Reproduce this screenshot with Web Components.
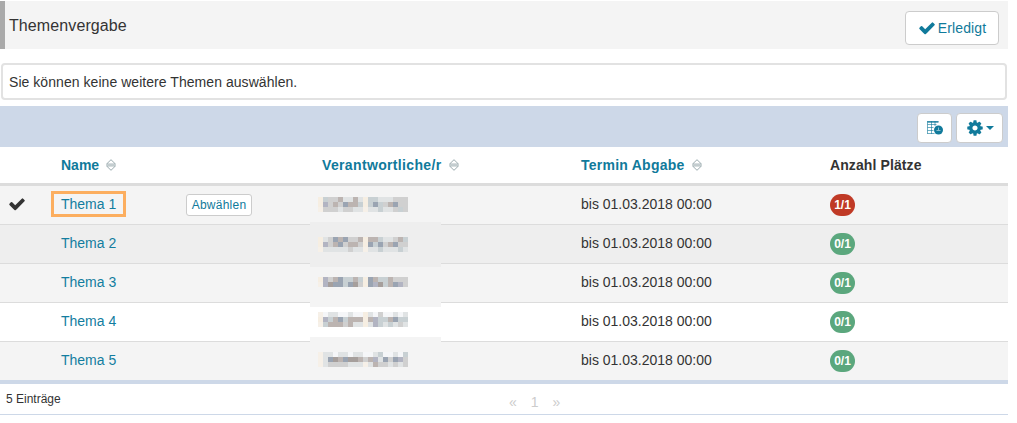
<!DOCTYPE html>
<html lang="de">
<head>
<meta charset="utf-8">
<title>Themenvergabe</title>
<style>
html, body { margin: 0; background: #fff; }
body { font: 14px/20px "Liberation Sans", Arial, sans-serif; color: #333; padding-top: 1px; width: 1008px; }
</style>
</head>
<body>
<page-title>
  Themenvergabe
  <ui-button slot="action" size="large"><ui-icon name="check" size="18"></ui-icon>Erledigt</ui-button>
</page-title>
<info-box>Sie können keine weitere Themen auswählen.</info-box>
<table-toolbar>
  <ui-button size="tool" style="--w:35px"><ui-icon name="table" size="16"></ui-icon></ui-button>
  <ui-button size="tool" style="--w:47px"><ui-icon name="cog" size="18"></ui-icon><ui-icon name="caret" size="8"></ui-icon></ui-button>
</table-toolbar>
<topic-head></topic-head>
<topic-row name="Thema 1" date="bis 01.03.2018 00:00" places="1/1" full chosen focused
  bg="#f4f4f4" top="11" mosaic="acggdeedeacceeeggg,abgdgfddcacfcgdfgg,lgggeggeeleeceegcg">
  <ui-button slot="action" size="small">Abwählen</ui-button>
</topic-row>
<topic-row name="Thema 2" date="bis 01.03.2018 00:00" places="0/1"
  bg="#eeeeee" top="12" patch="-3,45" mosaic="aegfdfggdaddceegdc,abgdfgddgafcfgdfgg,leeeeegeeleeceeece"></topic-row>
<topic-row name="Thema 3" date="bis 01.03.2018 00:00" places="0/1"
  bg="#f4f4f4" top="13" patch="3,40" mosaic="abgdfccdcafdccdggg,lbhffcfhgafbhcdfbg"></topic-row>
<topic-row name="Thema 4" date="bis 01.03.2018 00:00" places="0/1"
  bg="#ffffff" top="9" mosaic="lweewwewwaewgwwewe,abcdfcdddadbccdfcc,lcdddgdeeaebcecege"></topic-row>
<topic-row name="Thema 5" date="bis 01.03.2018 00:00" places="0/1" last
  bg="#f4f4f4" top="10" patch="-5,20" mosaic="leeweeweewwecwwewc,lefhdfhhdgdbefgfbg,leggggeeeledggegeg"></topic-row>
<table-foot></table-foot>

<script>
const ICONS = {
  check: '<svg viewBox="0 0 1792 1792"><path d="M1671 566q0 40-28 68l-724 724-136 136q-28 28-68 28t-68-28l-136-136-362-362q-28-28-28-68t28-68l136-136q28-28 68-28t68 28l294 295 656-657q28-28 68-28t68 28l136 136q28 28 28 68z"/></svg>',
  cog: '<svg viewBox="0 0 1792 1792"><path d="M1152 896q0-106-75-181t-181-75-181 75-75 181 75 181 181 75 181-75 75-181zm512-109v222q0 12-8 23t-20 13l-185 28q-19 54-39 91 35 50 107 138 10 12 10 25t-9 23q-27 37-99 108t-94 71q-12 0-26-9l-138-108q-44 23-91 38-16 136-29 186-7 28-36 28h-222q-14 0-24.500-8.500t-11.500-21.500l-28-184q-49-16-90-37l-141 107q-10 9-25 9-14 0-25-11-126-114-165-168-7-10-7-23 0-12 8-23 15-21 51-66.500t54-70.500q-27-50-41-99l-183-27q-13-2-21-12.500t-8-23.500v-222q0-12 8-23t19-13l186-28q14-46 39-92-40-57-107-138-10-12-10-24 0-10 9-23 26-36 98.500-107.500t94.500-71.500q13 0 26 10l138 107q44-23 91-38 16-136 29-186 7-28 36-28h222q14 0 24.500 8.500t11.500 21.500l28 184q49 16 90 37l142-107q9-9 24-9 13 0 25 10 129 119 165 170 7 8 7 22 0 12-8 23-15 21-51 66.500t-54 70.500q26 50 41 98l183 28q13 2 21 12.500t8 23.500z"/></svg>',
  caret: '<svg viewBox="0 0 8 8"><path d="M0 2h8L4 6z"/></svg>',
  table: '<svg viewBox="0 0 16 16"><path fill="none" stroke="currentColor" opacity=".6" d="M.5 1.500h11M.5 4.500h9M.5 7.500h6M.5 10.500h6M.5 13.500h7M.5 1v13M4.500 1v13M8 1v5"/><path d="M.5 1h11v2H.5z" opacity=".6"/><circle cx="11.500" cy="10" r="4.500"/><path fill="#fff" d="M11 7.500h1v3h-1zM9.500 10h4v1h-4z" opacity=".5"/></svg>',
  sort: '<svg viewBox="0 0 11 12"><path fill="none" stroke="#90a1a6" stroke-width=".9" d="M5.500 .7 10 5.100H1zM1 6.900h9l-4.500 4.400z"/></svg>'
};

class UiIcon extends HTMLElement {
  connectedCallback() {
    const size = this.getAttribute('size') || 16;
    this.attachShadow({mode:'open'}).innerHTML = `
      <style>
        :host { display: inline-flex; flex: none; width: ${size}px; height: ${size}px; }
        svg { width: 100%; height: 100%; fill: currentColor; display: block; }
      </style>${ICONS[this.getAttribute('name')]}`;
  }
}

class UiButton extends HTMLElement {
  connectedCallback() {
    this.attachShadow({mode:'open'}).innerHTML = `
      <style>
        :host {
          display: inline-flex; align-items: center; justify-content: center; box-sizing: border-box;
          background: #fff; color: #107a9b; border: 1px solid #ccc; border-radius: 4px;
        }
        :host([size=large]) { width: 94px; height: 34px; gap: 2px; font-size: 14px; }
        :host([size=tool]) { width: var(--w); height: 30px; gap: 2px; }
        :host([size=small]) { width: 66px; height: 22px; font-size: 12px; letter-spacing: .25px; border-radius: 3px; }
      </style><slot></slot>`;
  }
}

class PageTitle extends HTMLElement {
  connectedCallback() {
    this.attachShadow({mode:'open'}).innerHTML = `
      <style>
        :host {
          display: flex; align-items: flex-start; justify-content: space-between; box-sizing: border-box;
          height: 48px; background: #f4f4f4; border-left: 5px solid #aaa; padding: 10px 9px 0 4px;
          font-size: 16px; line-height: 28px; color: #333; letter-spacing: .1px;
        }
        .t { margin-top: 1px; }
      </style><div class="t"><slot></slot></div><slot name="action"></slot>`;
  }
}

class InfoBox extends HTMLElement {
  connectedCallback() {
    this.attachShadow({mode:'open'}).innerHTML = `
      <style>
        :host {
          display: block; box-sizing: border-box; height: 37px; margin: 14px 1px 6px 1px;
          padding: 7px 6px; border: 2px solid #e2e2e2; border-radius: 4px; background: #fff; letter-spacing: .05px;
        }
      </style><slot></slot>`;
  }
}

class TableToolbar extends HTMLElement {
  connectedCallback() {
    this.attachShadow({mode:'open'}).innerHTML = `
      <style>
        :host {
          display: flex; justify-content: flex-end; align-items: flex-start; gap: 4px; box-sizing: border-box;
          height: 41px; background: #cdd8e8; padding: 7px 5px 0 0;
        }
      </style><slot></slot>`;
  }
}

const GRID = 'display: grid; grid-template-columns: 51px 135px 126px 259px 249px 188px; box-sizing: border-box; align-items: center;';

class TopicHead extends HTMLElement {
  connectedCallback() {
    const sort = '<ui-icon name="sort" size="12"></ui-icon>';
    this.attachShadow({mode:'open'}).innerHTML = `
      <style>
        :host { ${GRID} height: 39px; padding-top: 1px; padding-bottom: 2px; border-bottom: 3px solid #dcdcdc; font-weight: bold; color: #107a9b; background: #fff; }
        div { padding-left: 10px; display: flex; align-items: center; gap: 6px; white-space: nowrap; }
        .plain { color: #333; letter-spacing: .1px; }
      </style>
      <div style="grid-column: 2">Name ${sort}</div>
      <div style="grid-column: 4; letter-spacing: .35px">Verantwortliche/r ${sort}</div>
      <div style="grid-column: 5; letter-spacing: .25px">Termin Abgabe ${sort}</div>
      <div style="grid-column: 6" class="plain">Anzahl Plätze</div>`;
  }
}

const SHADES = { a:'#f6eee2', b:'#b2b4c2', c:'#c8d0d3', d:'#bcb4b1', e:'#e0e3e4', f:'#9aa4b2', g:'#d0d0d0', h:'#a69f9c', l:'#f6f0e8', w:'#f5f6f8' };

class MaskedName extends HTMLElement {
  connectedCallback() {
    const rows = this.getAttribute('cells').split(',');
    const rects = rows.map((row, y) => [...row].map((c, x) =>
      `<rect x="${x*5}" y="${y*5}" width="5" height="5" fill="${SHADES[c]}"/>`).join('')).join('');
    this.attachShadow({mode:'open'}).innerHTML = `
      <style>
        :host { display: block; width: 90px; height: ${rows.length*5}px; }
        svg { display: block; }
      </style>
      <svg width="90" height="${rows.length*5}" shape-rendering="crispEdges">${rects}</svg>`;
  }
}

class PlaceBadge extends HTMLElement {
  connectedCallback() {
    this.attachShadow({mode:'open'}).innerHTML = `
      <style>
        :host {
          display: inline-flex; align-items: center; justify-content: center; width: 25px; height: 22px;
          border-radius: 11px; background: #5ba77d; color: #fff; font-size: 12px; font-weight: bold;
        }
        :host([full]) { background: #c03a26; }
      </style><slot></slot>`;
  }
}

class TopicRow extends HTMLElement {
  connectedCallback() {
    const a = n => this.getAttribute(n);
    const on = n => this.hasAttribute(n);
    const patch = on('patch') ? a('patch').split(',') : null;
    // row 2's patch reaches over its neighbours' divider lines
    if (patch) this.style.zIndex = patch[0] === '-3' ? 2 : 1;
    this.attachShadow({mode:'open'}).innerHTML = `
      <style>
        :host {
          ${GRID} position: relative; height: 39px; background: ${a('bg')};
          border-bottom: 1px solid #dcdcdc;
        }
        :host([last]) { height: 38px; border-bottom: 0; }
        .check { padding-left: 8px; margin-top: -2px; display: flex; }
        .name { padding-left: 10px; margin-top: -2px; color: #137d9f; white-space: nowrap; }
        .focus {
          justify-self: start; box-sizing: border-box; height: 26px; width: 75px;
          padding: 0 7px; border: 3px solid #fcae5f; line-height: 20px;
        }
        .patch {
          position: absolute; left: 310px; width: 131px; background: ${a('bg')};
          top: ${patch ? patch[0] : 0}px; height: ${patch ? patch[1] : 0}px;
        }
        .who { padding-left: 6px; position: relative; z-index: 1; align-self: start; margin-top: ${a('top')}px; }
        .badge { padding-left: 10px; display: flex; }
        .date { padding-left: 10px; margin-top: -2px; }
      </style>
      <div class="check">${on('chosen') ? '<ui-icon name="check" size="18"></ui-icon>' : ''}</div>
      <div class="name ${on('focused') ? 'focus' : ''}">${a('name')}</div>
      <div><slot name="action"></slot></div>
      ${patch ? '<div class="patch"></div>' : ''}
      <div class="who"><masked-name cells="${a('mosaic')}"></masked-name></div>
      <div class="date">${a('date')}</div>
      <div class="badge"><place-badge ${on('full') ? 'full' : ''}>${a('places')}</place-badge></div>`;
  }
}

class TableFoot extends HTMLElement {
  connectedCallback() {
    this.attachShadow({mode:'open'}).innerHTML = `
      <style>
        :host {
          display: grid; grid-template-columns: 503px auto 1fr; align-items: center; box-sizing: border-box;
          height: 35px; border-top: 4px solid #cdd8e8; border-bottom: 1px solid #cdd8e8; padding-left: 6px; font-size: 12px;
        }
        .pages { display: flex; gap: 14px; color: #ccc; font-size: 14px; margin-top: 5px; }
      </style>
      <div>5 Einträge</div>
      <div class="pages"><span>«</span><span>1</span><span>»</span></div>`;
  }
}

customElements.define('ui-icon', UiIcon);
customElements.define('ui-button', UiButton);
customElements.define('page-title', PageTitle);
customElements.define('info-box', InfoBox);
customElements.define('table-toolbar', TableToolbar);
customElements.define('topic-head', TopicHead);
customElements.define('masked-name', MaskedName);
customElements.define('place-badge', PlaceBadge);
customElements.define('topic-row', TopicRow);
customElements.define('table-foot', TableFoot);
</script>
</body>
</html>
